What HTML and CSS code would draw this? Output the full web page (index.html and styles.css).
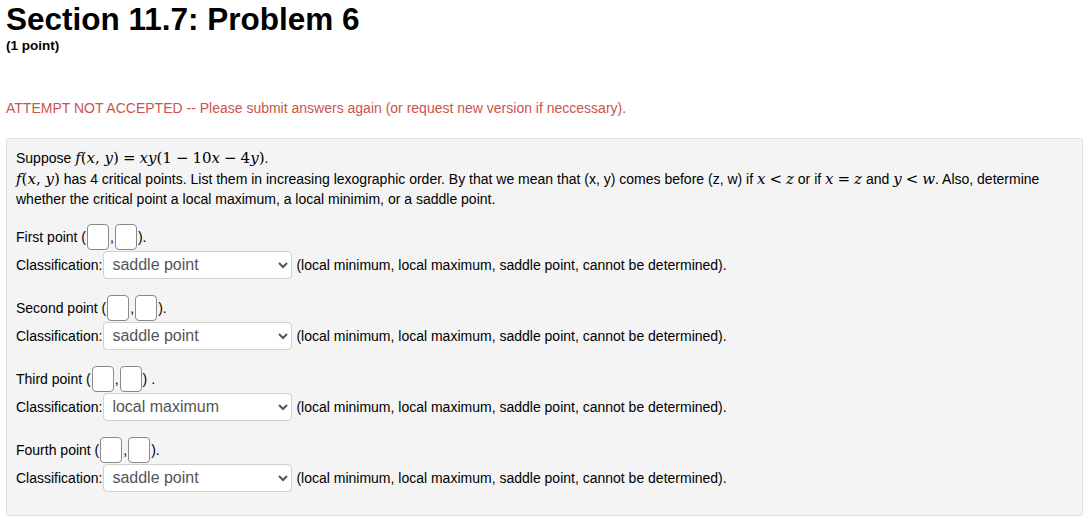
FILE: index.html
```html
<!DOCTYPE html>
<html lang="en">
<head>
    <meta charset="UTF-8">
    <title>Section 11.7: Problem 6</title>
    <link rel="stylesheet" href="styles.css">
</head>
<body>
    <h1 class="problem-title">Section 11.7: Problem 6</h1>
    <div class="problem-value">(1 point)</div>

    <div class="attempt-msg">ATTEMPT NOT ACCEPTED -- Please submit answers again (or request new version if neccessary).</div>

    <div class="problem-box">
        <p class="statement">
            Suppose <span class="math"><i>f</i>(<i>x</i>, <i>y</i>)<span class="op">=</span><i>xy</i>(1<span class="op">−</span>10<i>x</i><span class="op">−</span>4<i>y</i>)</span>.<br>
            <span class="math"><i>f</i>(<i>x</i>, <i>y</i>)</span> has 4 critical points. List them in increasing lexographic order. By that we mean that (x, y) comes before (z, w) if <span class="math"><i>x</i><span class="op">&lt;</span><i>z</i></span> or if <span class="math"><i>x</i><span class="op">=</span><i>z</i></span> and <span class="math"><i>y</i><span class="op">&lt;</span><i>w</i></span>. Also, determine<br>
            whether the critical point a local maximum, a local minimim, or a saddle point.
        </p>

        <div class="answer-group">
            <div class="point-row">First point (<input type="text" class="coord">,<input type="text" class="coord">).</div>
            <div class="class-row">
                <span>Classification:</span>
                <select class="class-select">
                    <option>saddle point</option>
                </select>
                <span>(local minimum, local maximum, saddle point, cannot be determined).</span>
            </div>
        </div>

        <div class="answer-group">
            <div class="point-row">Second point (<input type="text" class="coord">,<input type="text" class="coord">).</div>
            <div class="class-row">
                <span>Classification:</span>
                <select class="class-select">
                    <option>saddle point</option>
                </select>
                <span>(local minimum, local maximum, saddle point, cannot be determined).</span>
            </div>
        </div>

        <div class="answer-group">
            <div class="point-row">Third point (<input type="text" class="coord">,<input type="text" class="coord">) .</div>
            <div class="class-row">
                <span>Classification:</span>
                <select class="class-select">
                    <option>local maximum</option>
                </select>
                <span>(local minimum, local maximum, saddle point, cannot be determined).</span>
            </div>
        </div>

        <div class="answer-group">
            <div class="point-row">Fourth point (<input type="text" class="coord">,<input type="text" class="coord">).</div>
            <div class="class-row">
                <span>Classification:</span>
                <select class="class-select">
                    <option>saddle point</option>
                </select>
                <span>(local minimum, local maximum, saddle point, cannot be determined).</span>
            </div>
        </div>
    </div>
</body>
</html>
```

FILE: styles.css
```css
body {
    margin: 0;
    padding: 0 6px;
    background: #fff;
    color: #000;
    font-family: "Liberation Sans", Arial, sans-serif;
    font-size: 14px;
}

.problem-title {
    margin: 0;
    padding-top: 1px;
    font-size: 31.5px;
    line-height: 36px;
    font-weight: bold;
}

.problem-value {
    font-size: 13.5px;
    font-weight: bold;
    line-height: 18px;
}

.attempt-msg {
    margin-top: 44px;
    color: #c9544f;
    font-size: 14px;
    line-height: 18px;
}

.problem-box {
    margin-top: 21px;
    padding: 9px 9px 23px;
    background: #f4f4f4;
    border: 1px solid #e0e0e0;
    border-radius: 3px;
}

.statement {
    margin: 0 0 14px;
    line-height: 20.5px;
}

.math {
    font-family: "DejaVu Serif", "Liberation Serif", serif;
    font-size: 15px;
}

.math i {
    font-style: italic;
}

.math .op {
    margin: 0 4px;
}

.answer-group + .answer-group {
    margin-top: 16px;
}

.point-row {
    display: flex;
    align-items: center;
    height: 27px;
    white-space: pre;
}

.coord {
    width: 22px;
    height: 26px;
    margin: 0 1px;
    padding: 0;
    box-sizing: border-box;
    border: 1px solid #8a8a8a;
    border-radius: 4px;
    background: #fff;
}

.class-row {
    display: flex;
    align-items: center;
    height: 28px;
}

.class-select {
    width: 189px;
    height: 28px;
    margin: 0 4px 0 1px;
    padding: 2px 4px;
    box-sizing: border-box;
    border: 1px solid #d0d0d0;
    border-radius: 4px;
    background: #fff;
    color: #555;
    font-family: "Liberation Sans", Arial, sans-serif;
    font-size: 16px;
}
```
